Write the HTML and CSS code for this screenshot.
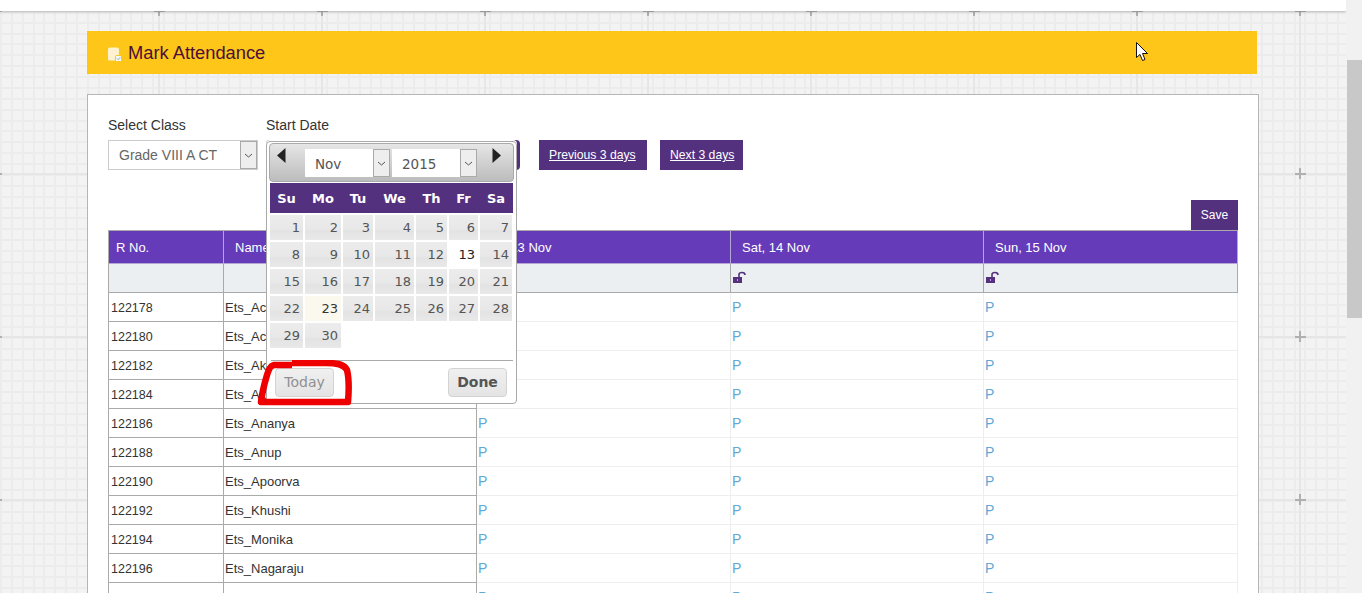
FILE: index.html
```html
<!DOCTYPE html>
<html lang="en">
<head>
    <meta charset="UTF-8">
    <title>Mark Attendance</title>
    <link rel="stylesheet" href="styles.css">
</head>
<body>
    <div class="page">
        <div class="main">
            <div class="top-bar"></div>
            <div class="content">
                <div class="title-bar">
                    <svg class="title-icon" width="15" height="15" viewBox="0 0 15 15">
                        <path d="M1 2.500 Q1 0.500 3 0.500 H10 Q12 0.500 12 2.500 V13.500 H2 Q1 13.500 1 12.500 Z" fill="#fdf1d0"/>
                        <rect x="8.500" y="8.500" width="6" height="6" rx="1" fill="#f5f5f5" stroke="#ffc61a"/>
                        <path d="M10 11.500 L11.200 12.700 L13.200 10.300" fill="none" stroke="#8fb7a0" stroke-width="1"/>
                    </svg>
                    <h1>Mark Attendance</h1>
                </div>

                <div class="card">
                    <div class="controls">
                        <div class="control">
                            <label>Select Class</label>
                            <div class="select class-select">
                                <span class="select-text">Grade VIII A CT</span>
                                <span class="select-arrow"><svg width="9" height="5" viewBox="0 0 9 5"><path d="M1 1 L4.5 4 L8 1" fill="none" stroke="#555"/></svg></span>
                            </div>
                        </div>
                        <div class="control start-date">
                            <label>Start Date</label>
                            <div class="date-field"></div>

                            <!-- Datepicker popup -->
                            <div class="picker">
                                <div class="picker-head">
                                    <svg class="prev" width="9" height="15" viewBox="0 0 9 15"><polygon points="8.5,0 8.5,15 0,7.5" fill="#222"/></svg>
                                    <div class="select month-select">
                                        <span class="select-text">Nov</span>
                                        <span class="select-arrow"><svg width="9" height="5" viewBox="0 0 9 5"><path d="M1 1 L4.5 4 L8 1" fill="none" stroke="#555"/></svg></span>
                                    </div>
                                    <div class="select month-select">
                                        <span class="select-text">2015</span>
                                        <span class="select-arrow"><svg width="9" height="5" viewBox="0 0 9 5"><path d="M1 1 L4.5 4 L8 1" fill="none" stroke="#555"/></svg></span>
                                    </div>
                                    <svg class="next" width="9" height="15" viewBox="0 0 9 15"><polygon points="0.5,0 0.5,15 9,7.5" fill="#222"/></svg>
                                </div>
                                <div class="week-days">
                                    <span>Su</span><span>Mo</span><span>Tu</span><span>We</span><span>Th</span><span>Fr</span><span>Sa</span>
                                </div>
                                <div class="days">
                                    <a>1</a><a>2</a><a>3</a><a>4</a><a>5</a><a>6</a><a>7</a>
                                    <a>8</a><a>9</a><a>10</a><a>11</a><a>12</a><a class="active">13</a><a>14</a>
                                    <a>15</a><a>16</a><a>17</a><a>18</a><a>19</a><a>20</a><a>21</a>
                                    <a>22</a><a class="highlight">23</a><a>24</a><a>25</a><a>26</a><a>27</a><a>28</a>
                                    <a>29</a><a>30</a>
                                </div>
                                <div class="picker-foot">
                                    <button class="today-btn">Today</button>
                                    <button class="done-btn">Done</button>
                                </div>
                                <svg class="scribble" width="100" height="48" viewBox="0 0 100 48">
                                    <path d="M36 5 L18 5 C14 6 13 9 11 15 C8 25 6 33 5 42 L92 42 C93 30 93 18 91 10 C88 4 80 3 70 3 L36 3" fill="none" stroke="#ee0000" stroke-width="6.500" stroke-linejoin="round"/>
                                </svg>
                            </div>
                        </div>
                        <a class="btn prev-days" href="#">Previous 3 days</a>
                        <a class="btn next-days" href="#">Next 3 days</a>
                    </div>

                    <div class="save-row">
                        <button class="save-btn">Save</button>
                    </div>

                    <table class="attendance">
                        <thead>
                            <tr class="head-row">
                                <th class="col-roll">R No.</th>
                                <th class="col-name">Name</th>
                                <th class="col-day">Fri, 13 Nov</th>
                                <th class="col-day">Sat, 14 Nov</th>
                                <th class="col-day">Sun, 15 Nov</th>
                            </tr>
                            <tr class="lock-row">
                                <td></td>
                                <td></td>
                                <td><svg class="lock" width="14" height="14" viewBox="0 0 14 14"><path d="M0 6 H9 V12 H0 Z" fill="#54317f"/><rect x="4" y="8" width="1" height="2" fill="#b9a8d0"/><path d="M6 6 V3.500 Q6 1.500 9 1.500 Q12 1.500 12 4" fill="none" stroke="#54317f" stroke-width="1.600"/></svg></td>
                                <td><svg class="lock" width="14" height="14" viewBox="0 0 14 14"><path d="M0 6 H9 V12 H0 Z" fill="#54317f"/><rect x="4" y="8" width="1" height="2" fill="#b9a8d0"/><path d="M6 6 V3.500 Q6 1.500 9 1.500 Q12 1.500 12 4" fill="none" stroke="#54317f" stroke-width="1.600"/></svg></td>
                                <td><svg class="lock" width="14" height="14" viewBox="0 0 14 14"><path d="M0 6 H9 V12 H0 Z" fill="#54317f"/><rect x="4" y="8" width="1" height="2" fill="#b9a8d0"/><path d="M6 6 V3.500 Q6 1.500 9 1.500 Q12 1.500 12 4" fill="none" stroke="#54317f" stroke-width="1.600"/></svg></td>
                            </tr>
                        </thead>
                        <tbody>
                            <tr><td>122178</td><td>Ets_Achal</td><td class="p">P</td><td class="p">P</td><td class="p">P</td></tr>
                            <tr><td>122180</td><td>Ets_Acharya</td><td class="p">P</td><td class="p">P</td><td class="p">P</td></tr>
                            <tr><td>122182</td><td>Ets_Akash</td><td class="p">P</td><td class="p">P</td><td class="p">P</td></tr>
                            <tr><td>122184</td><td>Ets_Akshay</td><td class="p">P</td><td class="p">P</td><td class="p">P</td></tr>
                            <tr><td>122186</td><td>Ets_Ananya</td><td class="p">P</td><td class="p">P</td><td class="p">P</td></tr>
                            <tr><td>122188</td><td>Ets_Anup</td><td class="p">P</td><td class="p">P</td><td class="p">P</td></tr>
                            <tr><td>122190</td><td>Ets_Apoorva</td><td class="p">P</td><td class="p">P</td><td class="p">P</td></tr>
                            <tr><td>122192</td><td>Ets_Khushi</td><td class="p">P</td><td class="p">P</td><td class="p">P</td></tr>
                            <tr><td>122194</td><td>Ets_Monika</td><td class="p">P</td><td class="p">P</td><td class="p">P</td></tr>
                            <tr><td>122196</td><td>Ets_Nagaraju</td><td class="p">P</td><td class="p">P</td><td class="p">P</td></tr>
                            <tr><td>122198</td><td>Ets_Nandini</td><td class="p">P</td><td class="p">P</td><td class="p">P</td></tr>
                        </tbody>
                    </table>
                </div>
            </div>
        </div>

        <div class="scrollbar">
            <div class="scroll-thumb"></div>
        </div>
    </div>

    <!-- Mouse pointer caught in the screenshot -->
    <svg class="cursor" width="13" height="20" viewBox="0 0 13 20">
        <path d="M0.500 0.500 V15.500 L4 12.500 L6.500 18.500 L9 17.500 L6.500 11.500 L11.500 11.500 Z" fill="#fff" stroke="#111"/>
    </svg>
</body>
</html>
```

FILE: styles.css
```css
html, body {
    margin: 0;
    height: 100%;
    overflow: hidden;
}
body {
    font-family: "Liberation Sans", Arial, sans-serif;
    font-size: 12px;
    color: #333;
    position: relative;
}
.page {
    display: flex;
    height: 593px;
    overflow: hidden;
}
.main {
    flex: 1;
    min-width: 0;
    background-color: #f3f3f3;
    background-image: url("data:image/svg+xml,%3Csvg xmlns='http://www.w3.org/2000/svg' width='163' height='163'%3E%3Crect x='158' y='0' width='2' height='163' fill='%23e6e6e6'/%3E%3Crect x='0' y='10' width='163' height='2' fill='%23e6e6e6'/%3E%3Crect x='154' y='10' width='11' height='2' fill='%23b0b0b0'/%3E%3Crect x='158' y='5' width='2' height='11' fill='%23b0b0b0'/%3E%3Crect x='0' y='10' width='2' height='2' fill='%23b0b0b0'/%3E%3C/svg%3E"),
        repeating-linear-gradient(to right, #ececec 0, #ececec 2px, transparent 2px, transparent 10.87px),
        repeating-linear-gradient(to bottom, #ececec 0, #ececec 2px, transparent 2px, transparent 10.87px);
}
.top-bar {
    height: 11px;
    background-color: #fff;
    box-shadow: 0 1px 3px rgba(0, 0, 0, 0.2);
}
.content {
    padding: 20px 0 0 87px;
}

/* Yellow title */
.title-bar {
    width: 1170px;
    height: 43px;
    background-color: #ffc61a;
    display: flex;
    align-items: center;
    padding-left: 20px;
    box-sizing: border-box;
    gap: 6px;
}
.title-bar h1 {
    margin: 0;
    font-size: 18.300px;
    font-weight: normal;
    color: #4a1038;
}
.title-icon {
    margin-top: 3px;
}

.card {
    width: 1172px;
    box-sizing: border-box;
    margin-top: 20px;
    padding: 22px 20px 0;
    background-color: #fff;
    border: 1px solid #b5b5b5;
    height: 600px;
}
.controls {
    display: flex;
    align-items: flex-end;
}
.control label {
    display: block;
    font-size: 14px;
    line-height: 16px;
    margin-bottom: 7px;
    color: #333;
}
.select {
    display: flex;
    box-sizing: border-box;
    background-color: #fff;
}
.select-text {
    flex: 1;
}
.select-arrow {
    display: flex;
    align-items: center;
    justify-content: center;
    background-color: #eee;
    border: 1px solid #aaa;
    box-sizing: border-box;
    width: 17px;
}
.class-select {
    width: 150px;
    height: 30px;
    border: 1px solid #ccc;
    font-size: 14px;
    line-height: 28px;
    color: #666;
}
.class-select .select-text {
    padding-left: 10px;
}
.start-date {
    position: relative;
    margin-left: 8px;
}
.date-field {
    width: 254px;
    height: 30px;
    background-color: #54317f;
    border-radius: 4px;
}
.btn {
    display: block;
    height: 30px;
    line-height: 30px;
    padding: 0 10px;
    background-color: #54317f;
    color: #fff;
    font-size: 12.200px;
    white-space: nowrap;
    box-sizing: border-box;
}
.prev-days {
    margin-left: 19px;
    width: 108px;
}
.next-days {
    margin-left: 13px;
    width: 83px;
}

/* Datepicker */
.picker {
    position: absolute;
    left: 0;
    top: 24px;
    width: 251px;
    height: 263px;
    box-sizing: border-box;
    padding: 1px 2px;
    background-color: #fff;
    border: 1px solid #aaa;
    border-radius: 4px;
    box-shadow: 0 -1px 0 #fff;
    font-family: "DejaVu Sans", Verdana, sans-serif;
    font-size: 13px;
    z-index: 2;
}
.picker-head {
    display: flex;
    align-items: flex-start;
    height: 39px;
    box-sizing: border-box;
    padding: 4px 0 0 7px;
    border: 1px solid #aaa;
    border-radius: 4px;
    background: linear-gradient(#e6e6e6, #bcbcbc);
}
.picker-head .prev {
    margin-right: 19px;
}
.picker-head .next {
    margin-left: 15px;
}
.month-select {
    width: 85px;
    height: 28px;
    margin-top: 1px;
    line-height: 31px;
    font-size: 13.500px;
    color: #555;
    margin-right: 2px;
}
.month-select:last-of-type {
    margin-right: 0;
}
.month-select .select-text {
    padding-left: 10px;
}
.week-days,
.days {
    display: grid;
    grid-template-columns: 33px 36px 30px 39px 31px 29px 32px;
    column-gap: 2px;
    margin-left: 1px;
}
.week-days {
    width: 243px;
    height: 30px;
    margin-top: 1px;
    background-color: #54317f;
    color: #fff;
    font-weight: bold;
    line-height: 32px;
    text-align: center;
}
.days {
    margin-top: 2px;
    grid-auto-rows: 25px;
    row-gap: 2px;
}
.days a {
    background: linear-gradient(#ececec, #e8e8e8 55%, #e3e3e3 65%, #e9e9e9);
    color: #555;
    text-align: right;
    padding-right: 3px;
    line-height: 26px;
}
.days a.active {
    background: #fff;
    color: #212121;
}
.days a.highlight {
    background: #fbf9ee;
    color: #363636;
}
.picker-foot {
    display: flex;
    justify-content: space-between;
    margin: 12px 0 0 2px;
    padding: 7px 6px 0 4px;
    width: 242px;
    box-sizing: border-box;
    border-top: 1px solid #aaa;
}
.picker-foot button {
    width: 59px;
    height: 29px;
    padding: 0 0 2px;
    font-family: "DejaVu Sans", Verdana, sans-serif;
    font-size: 14px;
    border: 1px solid #d3d3d3;
    border-radius: 4px;
    background: linear-gradient(#f0f0f0, #e4e4e4);
}
.today-btn {
    color: #8f8f8f;
}
.done-btn {
    font-weight: bold;
    color: #555;
}
.scribble {
    position: absolute;
    left: -11px;
    top: 218px;
}

/* Table */
.save-row {
    display: flex;
    justify-content: flex-end;
    margin-top: 30px;
}
.save-btn {
    width: 47px;
    height: 30px;
    padding: 0;
    border: none;
    background-color: #54317f;
    color: #fff;
    font-family: "Liberation Sans", Arial, sans-serif;
    font-size: 12px;
}
.attendance {
    width: 1130px;
    table-layout: fixed;
    border-collapse: separate;
    border-spacing: 0;
    border-top: 1px solid #aaa;
    border-left: 1px solid #aaa;
    font-size: 13px;
}
.attendance th,
.attendance td {
    box-sizing: border-box;
    padding: 0 0 0 1px;
    border-right: 1px solid #eee;
    border-bottom: 1px solid #eee;
}
.attendance .col-roll {
    width: 115px;
}
.attendance .col-name {
    width: 253px;
}
.attendance .col-day {
    width: 254px;
}
.attendance .col-day + .col-day {
    width: 253px;
}
.attendance .col-day + .col-day + .col-day {
    width: 254px;
}
.head-row {
    height: 33px;
}
.attendance .head-row th {
    padding: 0 0 0 11px;
    background-color: #653bb9;
    color: #fff;
    font-weight: normal;
    text-align: left;
    border-color: #b5a6d4;
}
.attendance .head-row th:first-child {
    padding-left: 7px;
}
.lock-row {
    height: 29px;
}
.attendance .lock-row td {
    padding: 0 0 0 2px;
    background-color: #eceff1;
    border-color: #aaa;
    vertical-align: middle;
}
.lock {
    display: block;
}
.attendance tbody tr {
    height: 29px;
}
.attendance tbody td:first-child {
    font-size: 12.500px;
    padding: 1px 0 0 2px;
}
.attendance tbody td:nth-child(-n+2) {
    border-bottom-color: #aaa;
    border-right-color: #aaa;
}
.attendance td.p {
    padding: 0 0 0 1px;
    font-size: 14px;
    color: #62a8d4;
}

/* Scrollbar */
.scrollbar {
    width: 16px;
    background-color: #f1f1f1;
}
.scroll-thumb {
    margin: 60px 0 0 1px;
    height: 258px;
    background-color: #c8c8c8;
}
.cursor {
    position: absolute;
    left: 1136px;
    top: 42px;
}
```
